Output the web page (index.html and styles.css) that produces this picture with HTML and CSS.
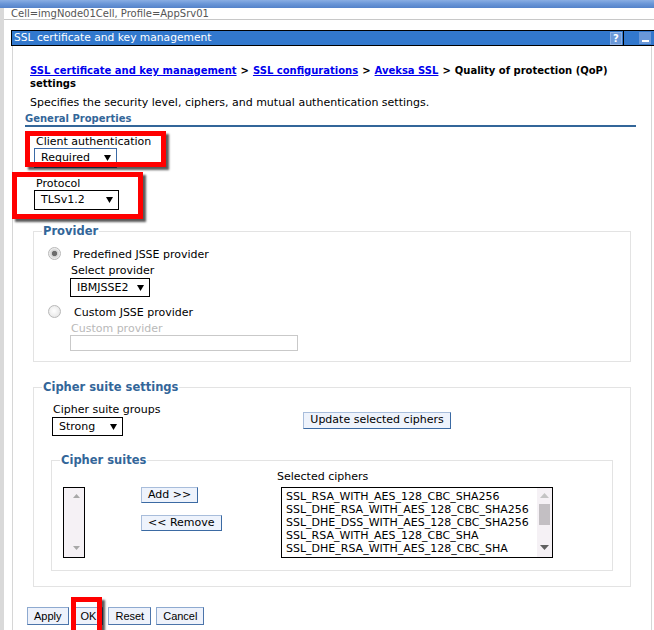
FILE: index.html
```html
<!DOCTYPE html>
<html>
<head>
<meta charset="utf-8">
<link rel="stylesheet" href="styles.css">
</head>
<body>
<div class="topbar"></div>
<div class="shell">
  <div class="cellbar">Cell=imgNode01Cell, Profile=AppSrv01</div>
  <div class="portlet">
    <div class="titlebar">
      <span class="title">SSL certificate and key management</span>
      <span class="tb-help">?</span>
      <span class="tb-sep"></span>
      <span class="tb-min"><span class="tb-min-bar"></span></span>
    </div>
    <div class="pbody">
      <div class="crumbs"><a href="#">SSL certificate and key management</a><span class="sep">&gt;</span><a href="#">SSL configurations</a><span class="sep">&gt;</span><a href="#">Aveksa SSL</a><span class="sep">&gt;</span><span>Quality of protection (QoP)</span> <span>settings</span></div>
      <p class="desc">Specifies the security level, ciphers, and mutual authentication settings.</p>
      <h2 class="gp">General Properties</h2>

      <div class="field">
        <div class="flabel">Client authentication</div>
        <div class="sel sel-focus sel-client"><span>Required</span><svg class="arr" width="7" height="6" viewBox="0 0 7 6"><polygon points="0,0 7,0 3.5,6"/></svg></div>
      </div>
      <div class="field field-proto">
        <div class="flabel">Protocol</div>
        <div class="sel sel-proto"><span>TLSv1.2</span><svg class="arr" width="7" height="6" viewBox="0 0 7 6"><polygon points="0,0 7,0 3.5,6"/></svg></div>
      </div>

      <fieldset class="fs fs-provider">
        <legend class="lg">Provider</legend>
        <div class="prov-body">
          <div class="opt">
            <span class="radio radio-on"></span>
            <span class="opt-label">Predefined JSSE provider</span>
          </div>
          <div class="sub">
            <div class="sub-label">Select provider</div>
            <div class="sel sel-ibm"><span>IBMJSSE2</span><svg class="arr" width="7" height="6" viewBox="0 0 7 6"><polygon points="0,0 7,0 3.5,6"/></svg></div>
          </div>
          <div class="opt opt2">
            <span class="radio"></span>
            <span class="opt-label opt-label2">Custom JSSE provider</span>
          </div>
          <div class="sub">
            <div class="sub-label disabled">Custom provider</div>
            <div class="txt"></div>
          </div>
        </div>
      </fieldset>

      <fieldset class="fs fs-cipher">
        <legend class="lg">Cipher suite settings</legend>
        <div class="cs-body">
          <div class="cs-top">
            <div class="cs-group">
              <div class="sub-label">Cipher suite groups</div>
              <div class="sel sel-strong"><span>Strong</span><svg class="arr" width="7" height="6" viewBox="0 0 7 6"><polygon points="0,0 7,0 3.5,6"/></svg></div>
            </div>
            <button class="btn btn-update">Update selected ciphers</button>
          </div>
          <fieldset class="fs fs-suites">
            <legend class="lg">Cipher suites</legend>
            <div class="cs-grid">
              <div class="sel-title">Selected ciphers</div>
              <div class="list list-left">
                <div class="sb sb-left">
                  <span class="sb-up"><svg width="7" height="4" viewBox="0 0 7 4"><polygon points="0,4 7,4 3.5,0" fill="#a8a8a8"/></svg></span>
                  <span class="sb-fill"></span>
                  <span class="sb-down"><svg width="7" height="4" viewBox="0 0 7 4"><polygon points="0,0 7,0 3.5,4" fill="#a8a8a8"/></svg></span>
                </div>
              </div>
              <div class="mid">
                <button class="btn btn-small">Add &gt;&gt;</button>
                <button class="btn btn-small">&lt;&lt; Remove</button>
              </div>
              <div class="list list-sel">
                <div class="items">
                  <div>SSL_RSA_WITH_AES_128_CBC_SHA256</div>
                  <div>SSL_DHE_RSA_WITH_AES_128_CBC_SHA256</div>
                  <div>SSL_DHE_DSS_WITH_AES_128_CBC_SHA256</div>
                  <div>SSL_RSA_WITH_AES_128_CBC_SHA</div>
                  <div>SSL_DHE_RSA_WITH_AES_128_CBC_SHA</div>
                </div>
                <div class="sb sb-right">
                  <span class="sb-up"><svg width="9" height="5" viewBox="0 0 9 5"><polygon points="0,5 9,5 4.5,0" fill="#c4c4c4"/></svg></span>
                  <span class="thumb"></span>
                  <span class="sb-fill"></span>
                  <span class="sb-down"><svg width="9" height="5" viewBox="0 0 9 5"><polygon points="0,0 9,0 4.5,5" fill="#606060"/></svg></span>
                </div>
              </div>
            </div>
          </fieldset>
        </div>
      </fieldset>

      <div class="actions">
        <button class="pbtn">Apply</button>
        <button class="pbtn">OK</button>
        <button class="pbtn">Reset</button>
        <button class="pbtn">Cancel</button>
      </div>

      <span class="mark mark-client"></span>
      <span class="mark mark-proto"></span>
      <span class="mark mark-ok"></span>
    </div>
  </div>
</div>
</body>
</html>
```

FILE: styles.css
```css
html, body {
  margin: 0;
  padding: 0;
  overflow: hidden;
}
body {
  width: 654px;
  height: 630px;
  background: #fff;
  color: #000;
  font-family: "DejaVu Sans", Verdana, sans-serif;
  font-size: 11px;
}
.topbar {
  height: 8px;
  background: linear-gradient(180deg, #8aaee3 0%, #6b97d8 45%, #5482c9 100%);
}
.shell {
  border-left: 4px solid #d9d9d9;
  height: 622px;
  overflow: hidden;
}
.cellbar {
  height: 11px;
  line-height: 11px;
  font-size: 10px;
  color: #555;
  padding-left: 7px;
  border-bottom: 1px solid #c8c8c8;
  margin-bottom: 10px;
  white-space: nowrap;
}
.portlet {
  margin-left: 7px;
}
.titlebar {
  display: flex;
  align-items: center;
  height: 14px;
  border: 1px solid #000;
  border-right: 0;
  background: #3278cd;
  color: #fff;
  font-size: 10.7px;
}
.title {
  padding-left: 2px;
  line-height: 14px;
  white-space: nowrap;
}
.tb-help {
  margin-left: auto;
  width: 12px;
  height: 13px;
  box-sizing: border-box;
  background: #6a98d8;
  border: 1px solid #8cb0e4;
  color: #fff;
  font: bold 10px/11px "DejaVu Sans", sans-serif;
  text-align: center;
}
.tb-sep {
  width: 1px;
  align-self: stretch;
  background: #000;
  margin-left: 1px;
}
.tb-min {
  width: 12px;
  height: 12px;
  margin-left: 15px;
  margin-right: 3px;
  background: #6a98d8;
  display: flex;
  align-items: flex-end;
  justify-content: center;
}
.tb-min-bar {
  width: 7px;
  height: 2px;
  background: #fff;
  margin-bottom: 2px;
}
.pbody {
  position: relative;
  margin: 0 2px 0 1px;
  border-left: 1px solid #d6d6d6;
  border-right: 1px solid #d6d6d6;
  padding: 18px 15px 0 12px;
  height: 566px;
}
.crumbs {
  margin-left: 5px;
  font-weight: bold;
  font-size: 10px;
  line-height: 13px;
}
.crumbs a {
  color: #0000ee;
  text-decoration: underline;
}
.crumbs .sep {
  margin: 0 4px;
}
.desc {
  margin: 6px 0 0 5px;
  line-height: 13px;
}
.gp {
  margin: 4px 0 0 0;
  font-size: 10px;
  font-weight: bold;
  line-height: 12px;
  color: #336699;
  border-bottom: 2px solid #336699;
}
.field {
  margin-left: 9px;
  margin-top: 9px;
}
.field-proto {
  margin-top: 10px;
}
.flabel {
  line-height: 12px;
  padding-left: 2px;
}
.sel {
  display: flex;
  align-items: center;
  justify-content: space-between;
  box-sizing: border-box;
  border: 1px solid #000;
  background: #fff;
  padding: 0 5px 0 6px;
  line-height: 16px;
}
.sel-focus {
  border-color: #3a6aa6;
}
.sel-client { width: 83px; height: 20px; }
.sel-proto { width: 85px; height: 20px; }
.sel-ibm { width: 80px; height: 19px; margin-top: 1px; }
.sel-strong { width: 71px; height: 19px; margin-top: 1px; }
.arr { fill: #000; flex: none; }

.fs {
  border: 1px solid #e3e3e3;
  padding: 0;
  min-width: 0;
}
.lg {
  margin-left: 8px;
  padding: 0 1px;
  font-size: 11.5px;
  font-weight: bold;
  line-height: 14px;
  color: #336699;
}
.fs-provider {
  margin: 14px 5px 0 8px;
}
.prov-body {
  padding: 9px 0 10px 14px;
}
.opt {
  display: flex;
  align-items: flex-start;
}
.opt2 { margin-top: 8px; }
.radio {
  width: 13px;
  height: 13px;
  box-sizing: border-box;
  border-radius: 50%;
  border: 1px solid #b8b8b8;
  background: radial-gradient(circle at 45% 45%, #ffffff 0, #ececec 60%, #dcdcdc 100%);
  flex: none;
}
.radio-on {
  background: radial-gradient(circle at 50% 50%, #6c6c6c 0, #6c6c6c 2.2px, #cfcfcf 3px, #f2f2f2 5.5px);
}
.opt-label {
  margin-left: 12px;
  margin-top: 2px;
  line-height: 12px;
}
.opt-label2 { margin-left: 13px; }
.sub {
  margin-left: 22px;
  margin-top: 4px;
}
.sub-label {
  line-height: 12px;
  padding-left: 1px;
  white-space: nowrap;
}
.disabled { color: #b9b9b9; }
.txt {
  width: 228px;
  height: 16px;
  box-sizing: border-box;
  border: 1px solid #c9c9c9;
  background: #fff;
}

.fs-cipher {
  margin: 18px 5px 0 8px;
}
.cs-body {
  padding: 10px 15px 15px 15px;
}
.cs-top {
  display: flex;
  align-items: center;
}
.cs-group {
  margin-left: 3px;
  width: 251px;
}
.btn {
  font-family: "DejaVu Sans", Verdana, sans-serif;
  font-size: 11px;
  line-height: 14px;
  color: #000;
  background: #eef3fc;
  border: 1px solid;
  border-color: #a8bddb #3b6aa3 #3b6aa3 #a8bddb;
  padding: 0 6px;
  margin: 0;
  box-sizing: border-box;
  white-space: nowrap;
}
.btn-update { width: 148px; height: 17px; }
.btn-small { height: 16px; }
.fs-suites {
  margin-top: 17px;
}
.cs-grid {
  display: grid;
  grid-template-columns: 22px 80px 276px;
  grid-template-rows: 16px 71px;
  column-gap: 56px;
  padding: 4px 13px 12px 11px;
}
.sel-title {
  grid-column: 3;
  grid-row: 1;
  line-height: 12px;
}
.list {
  box-sizing: border-box;
  border: 1px solid #000;
  display: flex;
  background: #fff;
  grid-row: 2;
}
.list-left {
  grid-column: 1;
  background: #f6f2f6;
  justify-content: flex-end;
}
.mid {
  grid-column: 2;
  grid-row: 2;
  display: flex;
  flex-direction: column;
  align-items: flex-start;
  gap: 12px;
}
.list-sel {
  grid-column: 3;
  margin-left: 4px;
  width: 272px;
}
.items {
  flex: 1;
  padding: 2px 0 0 4px;
  line-height: 13px;
  white-space: nowrap;
  overflow: hidden;
}
.sb {
  display: flex;
  flex-direction: column;
  align-items: center;
  background: #f5f1f5;
}
.sb-left { width: 16px; }
.sb-right { width: 15px; }
.sb-up, .sb-down {
  height: 15px;
  display: flex;
  align-items: center;
  justify-content: center;
}
.sb-down { margin-bottom: 2px; }
.sb-fill { flex: 1; }
.thumb {
  width: 11px;
  height: 21px;
  margin-top: 1px;
  background: #c3bfc3;
}
.actions {
  display: flex;
  gap: 5px;
  margin: 20px 0 0 2px;
}
.pbtn {
  font-family: "Liberation Sans", Arial, sans-serif;
  font-size: 11px;
  height: 18px;
  line-height: 16px;
  padding: 0 6px;
  margin: 0;
  color: #000;
  background: #eef2fb;
  border: 1px solid;
  border-color: #8eaad0 #4b74aa #4b74aa #8eaad0;
  box-sizing: border-box;
}
.mark {
  position: absolute;
  box-sizing: border-box;
  border: 5px solid #ff0000;
  box-shadow: 3px 3px 2px rgba(0, 0, 0, 0.65);
}
.mark-client { left: 12px; top: 85px; width: 141px; height: 36px; }
.mark-proto { left: -1px; top: 126px; width: 131px; height: 47px; }
.mark-ok { left: 58px; top: 551px; width: 31px; height: 38px; }
```
